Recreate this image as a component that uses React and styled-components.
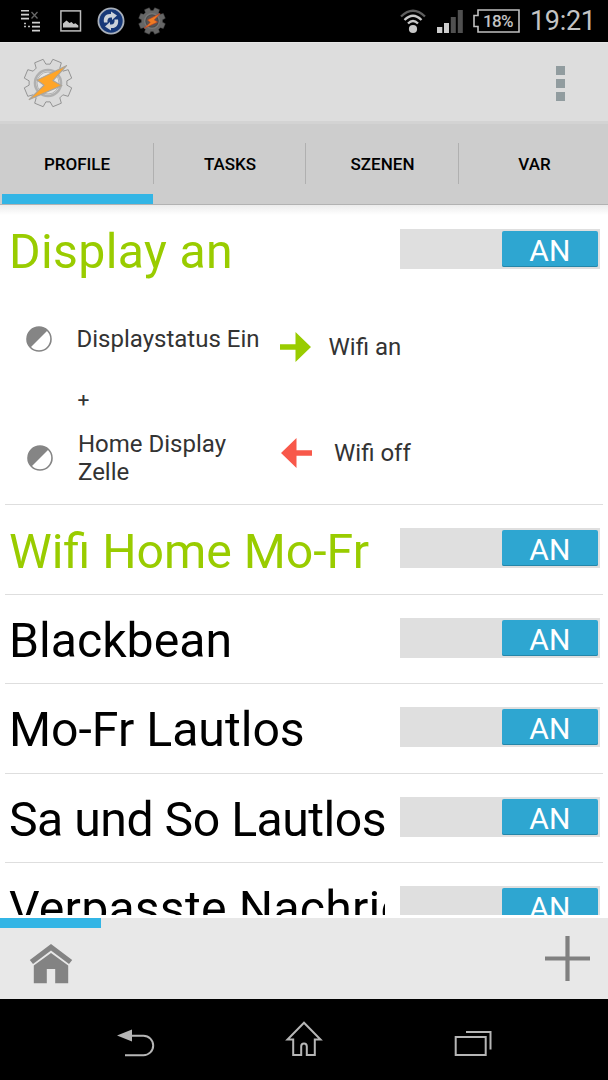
import React, { useState } from "react";
import styled, { createGlobalStyle } from "styled-components";

const tabs = ["PROFILE", "TASKS", "SZENEN", "VAR"];

const profiles = [
    { name: "Display an", active: true, open: true, tracking: "0.35px" },
    { name: "Wifi Home Mo-Fr", active: true },
    { name: "Blackbean" },
    { name: "Mo-Fr Lautlos" },
    { name: "Sa und So Lautlos", tracking: "-0.5px" },
    { name: "Verpasste Nachrichten", tracking: "0.2px" },
];

const gearPath = () => {
    // eight trapezoid teeth round a circle
    const points = [];
    for (let i = 0; i < 8; i++) {
        const mid = (i * 45 + 22.5) * Math.PI / 180;
        [[-0.28, 19], [-0.19, 24.2], [0.19, 24.2], [0.28, 19]].forEach(([a, r]) => {
            points.push(`${(Math.cos(mid + a) * r).toFixed(2)} ${(Math.sin(mid + a) * r).toFixed(2)}`);
        });
    }
    return `M${points.join("L")}Z`;
};

const GearIcon = ({ size, dark }) => (
    <svg width={size} height={size} viewBox="-25 -25 50 50">
        <path d={gearPath()} fill={dark ? "#666" : "#dadada"} stroke={dark ? "#484848" : "#8c8c8c"} strokeWidth=".9" strokeLinejoin="round" />
        <circle r="13" fill={dark ? "#555" : "#e4e4e4"} stroke={dark ? "#777" : "#b0b0b0"} strokeWidth="2.6" />
        <circle r="11" fill="none" stroke={dark ? "#333" : "#9c9c9c"} strokeWidth=".7" />
        <path
            d={dark
                ? "M14.5 -13.5L-8 -2L-3 2.5L-14 13L10 2L4 -2Z"
                : "M18.8 -17.6L-11 -3L-4 2.2L-19.2 16.8L13.6 2.6L5 -2.4Z"}
            fill={dark ? "#ee7b22" : "#ffa528"}
            stroke={dark ? "#b83c28" : "#aaa49c"}
            strokeWidth="1.1"
        />
    </svg>
);

const ListIcon = () => (
    <svg width="20" height="22" viewBox="0 0 20 22">
        <path d="M0 1h8M0 5h8M0 9h8M11 13h8M11 17h8M11 21h8" transform="translate(0 -.4)" stroke="#d0d0d0" strokeWidth="1.7" />
        <path d="M10.5 2l6 6.5M16.5 2l-6 6.5" stroke="#666" strokeWidth="1.3" />
        <path d="M3 13.5h2M3 16.5h2M7 16.5h2" stroke="#bbb" strokeWidth="1.5" />
    </svg>
);

const PictureIcon = () => (
    <svg width="22" height="22" viewBox="0 0 22 22">
        <rect x=".9" y=".9" width="19.6" height="20" fill="none" stroke="#bdbdbd" strokeWidth="1.5" />
        <path d="M3 17.5v-4l3.5-3 3 2.5 2-1 2 2 2-.7 2.8 2.2v2z" fill="#c4c4c4" />
    </svg>
);

const SyncIcon = () => (
    <svg width="28" height="28" viewBox="0 0 28 28">
        <circle cx="14" cy="14" r="12.6" fill="#163878" stroke="#a9b0ba" strokeWidth="1.8" />
        <path d="M7 15.5C6 10 9 6.5 14 7V4.5L20 8.5L15 13V10.5C11.5 10 10 12 10.5 15.5Z" fill="#cbd2da" />
        <path d="M21 12.5C22 18 19 21.5 14 21V23.5L8 19.5L13 15V17.5C16.5 18 18 16 17.5 12.5Z" fill="#cbd2da" />
    </svg>
);

const WifiIcon = () => (
    <svg width="26" height="25" viewBox="0 0 26 25" fill="none" strokeWidth="2.3">
        <path d="M1 7.5Q13 -4 25 7.5" stroke="#5e5e5e" />
        <path d="M4.5 11Q13 2.5 21.5 11" stroke="#c8c8c8" />
        <path d="M8 14.5Q13 9.5 18 14.5" stroke="#c8c8c8" />
        <circle cx="13" cy="20" r="4.1" fill="#c8c8c8" />
    </svg>
);

const SignalIcon = () => (
    <svg width="26" height="23" viewBox="0 0 26 23">
        <path d="M0 17h5.3v6H0zM7 13h5v10H7z" fill="#cdcdcd" />
        <path d="M13.8 7h5v16h-5zM20.8 0h5v23h-5z" fill="#505050" />
    </svg>
);

const ContrastIcon = () => (
    <svg width="26" height="26" viewBox="0 0 26 26">
        <circle cx="13" cy="13" r="12" fill="#fff" stroke="#858585" strokeWidth="1.6" />
        <path d="M21.5 4.5A12 12 0 0 0 4.5 21.5Z" fill="#858585" />
    </svg>
);

const ArrowIcon = ({ back }) => (
    <svg width="31" height="30" viewBox="0 0 31 30">
        {back
            ? <path d="M0 15L15.5 0V12.2H31V17.8H15.5V30Z" fill="#f8584a" />
            : <path d="M31 15L15.5 0V12.2H0V17.8H15.5V30Z" fill="#99cc00" />}
    </svg>
);

const HouseIcon = () => (
    <svg width="44" height="40" viewBox="0 0 44 40" fill="#838383">
        <path d="M22 0L43.2 16L40 20L22 6.5L4 20L.8 16Z" />
        <path d="M22 9L39.2 21.5V39.3H26.2V25H17.8V39.3H4.8V21.5Z" />
    </svg>
);

const PlusIcon = () => (
    <svg width="46" height="46" viewBox="0 0 46 46">
        <path d="M0 22.5H45M22.5 0V45" stroke="#808080" strokeWidth="4.2" />
    </svg>
);

const BackIcon = () => (
    <svg width="38" height="28" viewBox="0 0 38 28">
        <path d="M14 6.8H26.5A9.7 9.7 0 0 1 26.5 26.2H8" fill="none" stroke="#b6b6b6" strokeWidth="2" />
        <path d="M0 6.5L15 .5V12.5Z" fill="#b6b6b6" />
    </svg>
);

const NavHomeIcon = () => (
    <svg width="40" height="44" viewBox="0 0 40 44">
        <path
            d="M19 1.7L2.5 18.5H8.2V34H16.2V25.5Q16.2 22.5 19 22.5T21.8 25.5V34H29.8V18.5H35.5Z"
            fill="none"
            stroke="#b6b6b6"
            strokeWidth="2"
        />
    </svg>
);

const RecentIcon = () => (
    <svg width="38" height="26" viewBox="0 0 38 26" fill="none" stroke="#b6b6b6" strokeWidth="2">
        <path d="M1.7 7H31.7V25H1.7ZM12 2H36.5V19.5" />
    </svg>
);

const StatusBar = () => (
    <Status>
        <StatusIcons>
            <ListIcon />
            <PictureIcon />
            <SyncIcon />
            <GearIcon size={28} dark />
        </StatusIcons>
        <StatusInfo>
            <WifiIcon />
            <SignalIcon />
            <Battery>
                <svg width="47" height="24" viewBox="0 0 47 24">
                    <path d="M5 1H46V23H5V17.5H1V6.5H5Z" fill="none" stroke="#c0c0c0" strokeWidth="1.6" />
                </svg>
                <BatteryText>18%</BatteryText>
            </Battery>
            <Clock>19:21</Clock>
        </StatusInfo>
    </Status>
);

const ProfileDetails = () => (
    <Details>
        <Conditions>
            <Condition>
                <ContrastIcon />
                <DetailText $indent={24.5}>Displaystatus Ein</DetailText>
            </Condition>
            <And>+</And>
            <Condition $second>
                <ContrastIcon />
                <DetailText $indent={25}>Home Display Zelle</DetailText>
            </Condition>
        </Conditions>
        <Tasks>
            <Task>
                <ArrowIcon />
                <DetailText $indent={17.5}>Wifi an</DetailText>
            </Task>
            <Task $exit>
                <ArrowIcon back />
                <DetailText $indent={22}>Wifi off</DetailText>
            </Task>
        </Tasks>
    </Details>
);

const App = () => {
    const [tab, setTab] = useState(0);
    const [off, setOff] = useState({});

    const toggle = (name) => setOff({ ...off, [name]: !off[name] });

    return (
        <>
            <GlobalStyle />
            <Phone>
                <StatusBar />
                <ActionBar>
                    <GearIcon size={50} />
                    <Menu>
                        <Dot />
                        <Dot />
                        <Dot />
                    </Menu>
                </ActionBar>
                <TabBar>
                    {tabs.map((label, index) => (
                        <Tab key={label} $selected={index === tab} onClick={() => setTab(index)}>{label}</Tab>
                    ))}
                </TabBar>
                <List>
                    {profiles.map((profile) => (
                        <Profile key={profile.name}>
                            <ProfileHead>
                                <ProfileName $active={profile.active} $tracking={profile.tracking}>{profile.name}</ProfileName>
                                <Switch $off={off[profile.name]} onClick={() => toggle(profile.name)}>
                                    <Thumb $off={off[profile.name]}>{off[profile.name] ? "AUS" : "AN"}</Thumb>
                                </Switch>
                            </ProfileHead>
                            {profile.open && <ProfileDetails />}
                        </Profile>
                    ))}
                </List>
                <BottomBar>
                    <ProjectTab><HouseIcon /></ProjectTab>
                    <AddButton><PlusIcon /></AddButton>
                </BottomBar>
                <NavBar>
                    <BackIcon />
                    <NavHomeIcon />
                    <RecentIcon />
                </NavBar>
            </Phone>
        </>
    );
};

export default App;

const GlobalStyle = createGlobalStyle`
    * {
        box-sizing: border-box;
    }
    body {
        margin: 0;
        background: #fff;
        font-family: Roboto, "Noto Sans", sans-serif;
    }
    svg {
        display: block;
        flex-shrink: 0;
    }
`

const Phone = styled.div`
    display: flex;
    flex-direction: column;
    width: 608px;
    height: 1080px;
    overflow: hidden;
    background: #fff;
`

const Status = styled.div`
    display: flex;
    justify-content: space-between;
    height: 42px;
    padding: 0 14px 0 21px;
    background: #000;
    color: #c4c4c4;
`

const StatusIcons = styled.div`
    display: flex;
    align-items: center;
    > :nth-child(2) { margin-left: 19px; }
    > :nth-child(3) { margin-left: 15px; }
    > :nth-child(4) { margin-left: 13px; }
`

const StatusInfo = styled.div`
    display: flex;
    align-items: center;
    > :nth-child(2) { margin-left: 11px; }
    > :nth-child(3) { margin-left: 10px; }
    > :nth-child(4) { margin-left: 10px; }
`

const Battery = styled.div`
    display: grid;
    > * { grid-area: 1 / 1; }
`

const BatteryText = styled.span`
    padding-left: 3px;
    font-size: 17px;
    font-weight: 500;
    letter-spacing: -0.6px;
    line-height: 24px;
    text-align: center;
`

const Clock = styled.span`
    width: 64px;
    font-size: 27px;
    letter-spacing: -0.3px;
    line-height: 44px;
    text-align: right;
    white-space: nowrap;
`

const ActionBar = styled.div`
    display: flex;
    align-items: center;
    justify-content: space-between;
    height: 79px;
    padding: 1px 43px 0 23px;
    border-top: 1px solid #e6e6e6;
    background: #ddd;
`

const Menu = styled.div`
    display: flex;
    flex-direction: column;
    gap: 4px;
    padding-top: 1px;
`

const Dot = styled.span`
    width: 9px;
    height: 9px;
    background: #919c9f;
`

const TabBar = styled.div`
    display: grid;
    grid-template-columns: 154px 152px 153px 149px;
    height: 84px;
    border-top: 3px solid #d3d3d3;
    border-bottom: 1px solid #b2b2b2;
    background: #cdcdcd;
`

const Tab = styled.button`
    padding: 0 0 1px;
    border: 0;
    background:
        linear-gradient(#33b5e5, #33b5e5) 2px 100% / ${({ $selected }) => ($selected ? "151px 10px" : "0 0")} no-repeat,
        linear-gradient(#b0b0b0, #b0b0b0) 100% 19px / 1px 41px no-repeat;
    color: #000;
    font: 500 17px Roboto, sans-serif;
    &:last-child {
        padding-left: 2px;
        background-size: 0 0;
    }
`

const List = styled.div`
    height: 710px;
    padding-top: 1px;
    overflow: hidden;
    background: linear-gradient(#ececec, #fff 10px);
`

const Profile = styled.div`
    margin: 0 5px;
    border-bottom: 1px solid #dedede;
`

const ProfileHead = styled.div`
    display: flex;
    height: 88.4px;
    padding: 23px 3px 0 4px;
`

const ProfileName = styled.div`
    width: 376px;
    height: 64px;
    margin: -5.9px 15px 0 0;
    overflow: hidden;
    color: ${({ $active }) => ($active ? "#99cc00" : "#000")};
    font-size: 48.2px;
    letter-spacing: ${({ $tracking }) => $tracking || "normal"};
    line-height: 58px;
    white-space: nowrap;
`

const Switch = styled.div`
    display: flex;
    justify-content: ${({ $off }) => ($off ? "flex-start" : "flex-end")};
    width: 200px;
    height: 40px;
    padding: 2px;
    background: #dfdfdf;
`

const Thumb = styled.div`
    width: 96px;
    height: 36px;
    border-radius: 2px;
    background: ${({ $off }) => ($off ? "#aaa" : "#2ea6d1")};
    box-shadow: inset 0 -1px #2586a9;
    color: #fff;
    font-size: 30px;
    letter-spacing: 0.2px;
    line-height: 39px;
    text-align: center;
`

const Details = styled.div`
    display: flex;
    height: 210px;
`

const Conditions = styled.div`
    width: 275px;
    padding: 31px 0 0 21px;
`

const Condition = styled.div`
    display: flex;
    align-items: center;
    padding-left: ${({ $second }) => ($second ? "1px" : "0")};
    margin-top: ${({ $second }) => ($second ? "15px" : "0")};
`

const DetailText = styled.div`
    padding-left: ${({ $indent }) => $indent}px;
    color: #333;
    font-size: 24px;
    line-height: 28px;
`

const And = styled.div`
    margin-top: 32px;
    padding-left: 51.5px;
    color: #333;
    font-size: 21px;
    line-height: 30px;
`

const Tasks = styled.div`
    padding-top: 38px;
`

const Task = styled.div`
    display: flex;
    align-items: center;
    height: 30px;
    margin: ${({ $exit }) => ($exit ? "76px 0 0 1px" : "0")};
`

const BottomBar = styled.div`
    display: flex;
    align-items: flex-start;
    justify-content: space-between;
    height: 84px;
    border-top: 3px solid #fff;
    background: #e8e8e8;
`

const ProjectTab = styled.div`
    display: flex;
    justify-content: center;
    width: 101px;
    padding-top: 15.5px;
    border-top: 10px solid #33b5e5;
`

const AddButton = styled.div`
    padding: 18px 17px 0 0;
`

const NavBar = styled.div`
    display: flex;
    align-items: center;
    justify-content: space-between;
    height: 81px;
    padding: 7px 116px 0 117px;
    background: #000;
`
